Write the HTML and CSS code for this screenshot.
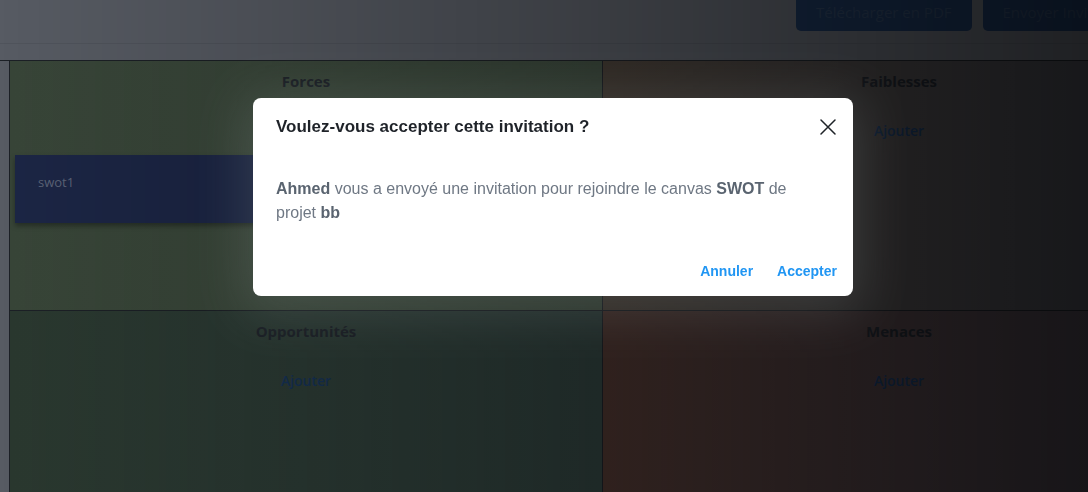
FILE: index.html
```html
<!DOCTYPE html>
<html lang="fr">
<head>
<meta charset="utf-8">
<title>Canvas SWOT</title>
<link rel="stylesheet" href="styles.css">
</head>
<body>
<div class="page">
  <header class="topbar">
    <div class="topbar-row">
      <div class="actions">
        <button class="btn">Télécharger en PDF</button>
        <button class="btn">Envoyer Invitation</button>
      </div>
    </div>
  </header>
  <section class="swot">
    <div class="quad forces">
      <h3 class="quad-title">Forces</h3>
      <a class="add">Ajouter</a>
      <div class="card">swot1</div>
    </div>
    <div class="quad faiblesses">
      <h3 class="quad-title">Faiblesses</h3>
      <a class="add">Ajouter</a>
    </div>
    <div class="quad opportunites">
      <h3 class="quad-title">Opportunités</h3>
      <a class="add">Ajouter</a>
    </div>
    <div class="quad menaces">
      <h3 class="quad-title">Menaces</h3>
      <a class="add">Ajouter</a>
    </div>
  </section>
</div>

<div class="backdrop"></div>

<div class="dialog-wrap">
  <div class="dialog" role="dialog">
    <div class="dialog-head">
      <h2 class="dialog-title">Voulez-vous accepter cette invitation ?</h2>
      <button class="close" aria-label="Fermer">
        <svg width="16" height="16" viewBox="0 0 16 16"><path d="M1 1 L15 15 M15 1 L1 15" stroke="#1f2328" stroke-width="1.5" fill="none" stroke-linecap="round"/></svg>
      </button>
    </div>
    <div class="dialog-body">
      <p><strong>Ahmed</strong> vous a envoyé une invitation pour rejoindre le canvas <strong>SWOT</strong> de projet <strong>bb</strong></p>
    </div>
    <div class="dialog-actions">
      <button class="text-btn">Annuler</button>
      <button class="text-btn">Accepter</button>
    </div>
  </div>
</div>
</body>
</html>
```
FILE: styles.css
```css
* { box-sizing: border-box; }

html, body {
  margin: 0;
  padding: 0;
  width: 1088px;
  height: 492px;
  overflow: hidden;
}

body {
  background: #575b63;
  font-family: "Open Sans", "Noto Sans", sans-serif;
}

.page {
  display: flex;
  flex-direction: column;
  width: 1088px;
}

.topbar {
  height: 61px;
  border-bottom: 1px solid #1c2026;
}

.topbar-row {
  height: 44px;
  border-bottom: 1px solid rgba(0, 0, 0, 0.07);
  display: flex;
  align-items: flex-start;
  padding-left: 796px;
}

.actions {
  display: flex;
  gap: 11px;
}

.btn {
  flex: none;
  height: 31px;
  padding: 0 20px 8px;
  border: 0;
  border-radius: 0 0 5px 5px;
  background: #1a3050;
  color: #2a3d57;
  font-family: "Open Sans", sans-serif;
  font-size: 15px;
  font-weight: 400;
  line-height: 22px;
  white-space: nowrap;
}

.swot {
  margin-left: 9px;
  border-left: 1px solid #1c2026;
  display: grid;
  grid-template-columns: 593px 593px;
  grid-template-rows: 250px 250px;
}

.quad {
  border-right: 1px solid #1c2026;
  border-bottom: 1px solid #1c2026;
  display: flex;
  flex-direction: column;
  align-items: center;
  padding: 10px 5px 0;
}

.forces { background: linear-gradient(90deg, #384538, #3e4c3f); }
.faiblesses { background: linear-gradient(90deg, #463d35, #40444f); }
.opportunites { background: linear-gradient(90deg, #2a382f, #2e3e3b); }
.menaces { background: linear-gradient(90deg, #48322d, #403e4a); }

.quad-title {
  margin: 0;
  font-size: 15px;
  line-height: 20px;
  font-weight: 700;
  color: #1d2229;
}

.add {
  margin-top: 30px;
  font-size: 14px;
  line-height: 20px;
  font-weight: 600;
  color: #163256;
}

.card {
  align-self: stretch;
  margin-top: 14px;
  height: 68px;
  padding: 18px 23px 0;
  background: #1c2645;
  color: #5b6377;
  font-size: 13px;
  line-height: 18px;
  box-shadow: 0 3px 5px rgba(0, 0, 0, 0.35);
}

.backdrop {
  position: fixed;
  inset: 0;
  background: linear-gradient(90deg, rgba(0, 0, 0, 0) 0%, rgba(0, 0, 0, 0.3) 50%, rgba(0, 0, 0, 0.64) 100%);
}

.dialog-wrap {
  position: fixed;
  inset: 0;
  display: flex;
  justify-content: center;
  align-items: flex-start;
  padding: 98px 0 0 18px;
}

.dialog {
  width: 600px;
  height: 198px;
  background: #ffffff;
  border-radius: 8px;
  display: flex;
  flex-direction: column;
  font-family: "Liberation Sans", Arial, sans-serif;
  box-shadow: 0 8px 50px 10px rgba(200, 215, 210, 0.14);
}

.dialog-head {
  display: flex;
  justify-content: space-between;
  align-items: center;
  padding: 18px 17px 0 23px;
}

.dialog-title {
  margin: 0;
  font-size: 17px;
  line-height: 22px;
  font-weight: 700;
  color: #1f2329;
}

.close {
  border: 0;
  background: none;
  padding: 0;
  width: 16px;
  height: 16px;
  display: flex;
}

.dialog-body {
  padding: 39px 23px 0;
}

.dialog-body p {
  margin: 0;
  font-size: 16px;
  line-height: 24px;
  color: #6f7884;
}

.dialog-body strong {
  color: #5a6470;
}

.dialog-actions {
  margin-top: auto;
  display: flex;
  justify-content: flex-end;
  gap: 8px;
  padding: 0 8px 7px;
}

.text-btn {
  height: 36px;
  min-width: 64px;
  padding: 6px 8px;
  border: 0;
  background: none;
  font-family: "Liberation Sans", Arial, sans-serif;
  font-size: 14px;
  font-weight: 700;
  color: #2196f3;
}
```
